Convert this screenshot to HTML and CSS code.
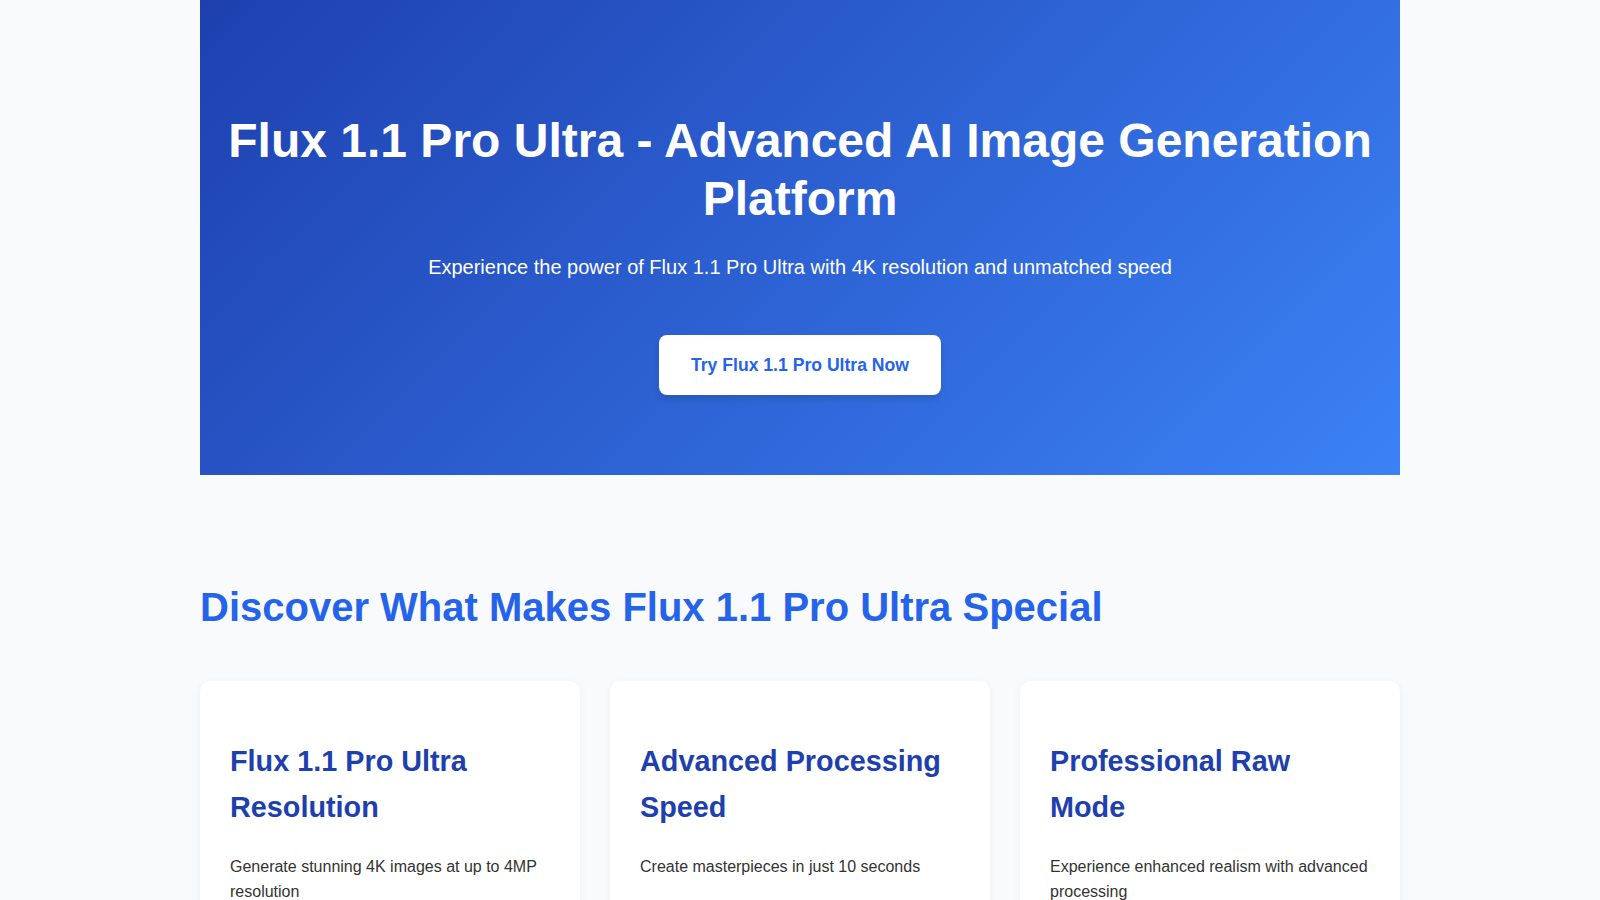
FILE: index.html
```html
<!DOCTYPE html>
<html lang="en">
<head>
<meta charset="utf-8">
<title>Flux 1.1 Pro Ultra</title>
<link rel="stylesheet" href="styles.css">
</head>
<body>
<main class="container">
  <section class="hero">
    <h1 class="hero-title">Flux 1.1 Pro Ultra - Advanced AI Image Generation Platform</h1>
    <p class="hero-subtitle">Experience the power of Flux 1.1 Pro Ultra with 4K resolution and unmatched speed</p>
    <div class="hero-cta">
      <a class="cta-button" href="#">Try Flux 1.1 Pro Ultra Now</a>
    </div>
  </section>

  <section class="features">
    <h2 class="features-title">Discover What Makes Flux 1.1 Pro Ultra Special</h2>
    <div class="feature-grid">
      <div class="feature-card">
        <h3 class="feature-name">Flux 1.1 Pro Ultra Resolution</h3>
        <p class="feature-text">Generate stunning 4K images at up to 4MP resolution</p>
      </div>
      <div class="feature-card">
        <h3 class="feature-name">Advanced Processing Speed</h3>
        <p class="feature-text">Create masterpieces in just 10 seconds</p>
      </div>
      <div class="feature-card">
        <h3 class="feature-name">Professional Raw Mode</h3>
        <p class="feature-text">Experience enhanced realism with advanced processing</p>
      </div>
    </div>
  </section>
</main>
</body>
</html>
```

FILE: styles.css
```css
* {
  box-sizing: border-box;
}

body {
  margin: 0;
  background: #f9fafb;
  font-family: "Liberation Sans", Arial, sans-serif;
  color: #333333;
  line-height: 1.6;
}

.container {
  width: 1200px;
  margin: 0 auto;
}

.hero {
  background: linear-gradient(135deg, #1e40af 0%, #3b82f6 100%);
  color: #ffffff;
  text-align: center;
  padding: 80px 20px;
}

.hero-title {
  font-size: 48px;
  line-height: 1.2;
  font-weight: 700;
  margin: 32px 0 24px;
}

.hero-subtitle {
  font-size: 20px;
  line-height: 32px;
  margin: 0 0 52px;
}

.hero-cta {
  display: flex;
  justify-content: center;
}

.cta-button {
  display: block;
  background: #ffffff;
  color: #2563eb;
  font-size: 17.6px;
  font-weight: 700;
  line-height: 1.6;
  padding: 16px 32px;
  border-radius: 8px;
  text-decoration: none;
  box-shadow: 0 4px 6px rgba(0, 0, 0, 0.12);
}

.features {
  padding: 80px 0 40px;
}

.features-title {
  color: #2563eb;
  font-size: 40px;
  line-height: 1.2;
  font-weight: 700;
  margin: 27.5px 0 50px;
}

.feature-grid {
  display: grid;
  grid-template-columns: repeat(3, 1fr);
  gap: 30px;
}

.feature-card {
  background: #ffffff;
  border-radius: 10px;
  padding: 30px;
  box-shadow: 0 2px 8px rgba(0, 0, 0, 0.05);
}

.feature-name {
  color: #1e40af;
  font-size: 28.8px;
  line-height: 1.6;
  font-weight: 700;
  margin: 27.6px 0 23px;
}

.feature-text {
  font-size: 16px;
  margin: 0 0 16px;
  color: #333333;
}
```
